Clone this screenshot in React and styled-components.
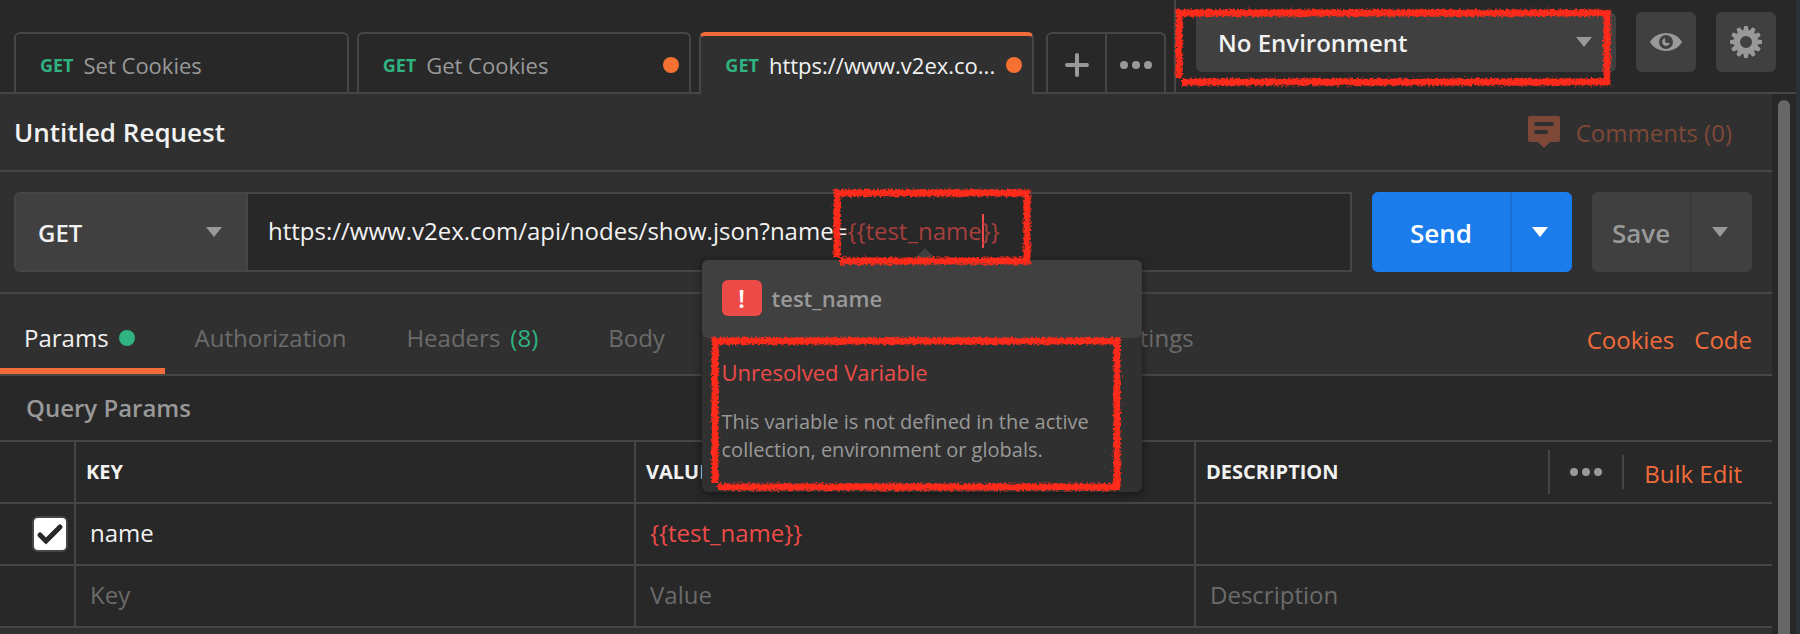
import React from 'react';
import styled, { createGlobalStyle, css } from 'styled-components';

const c = {
  page: '#282828',
  panel: '#303030',
  raised: '#404040',
  line: '#464646',
  text: '#f2f2f2',
  muted: '#999999',
  faint: '#6b6b6b',
  orange: '#f26b3a',
  green: '#2fb380',
  red: '#ed4b48',
  mark: '#ff2a1a',
};

const Global = createGlobalStyle`
  *, *::before, *::after { box-sizing: border-box; }
  html, body, #root { height: 100%; }
  body {
    margin: 0;
    background: ${c.page};
    color: ${c.text};
    font: 24px/32px "Open Sans", "Noto Sans", sans-serif;
    overflow: hidden;
  }
  button, input, select { font: inherit; color: inherit; margin: 0; }
  button { cursor: pointer; padding: 0; border: 0; background: none; }
  a { color: ${c.orange}; text-decoration: none; }
`;

const Window = styled.div`
  display: flex;
  flex-direction: column;
  height: 100%;
  background: ${c.page};
  border-right: 4px solid #2b3036;
`;

const TopBar = styled.header`
  display: flex;
  flex: none;
  height: 94px;
  border-bottom: 2px solid ${c.line};
`;

const TabStrip = styled.nav`
  flex: 1;
  min-width: 0;
  display: flex;
  align-items: flex-end;
  gap: 8px;
  padding: 32px 8px 0 14px;
`;

const RequestTab = styled.button`
  flex: 1 1 0;
  min-width: 0;
  height: 60px;
  display: flex;
  align-items: center;
  gap: 10px;
  padding: 4px 10px 0 24px;
  border: 2px solid ${c.line};
  border-bottom: 0;
  border-radius: 6px 6px 0 0;
  color: ${c.muted};
  text-align: left;
  ${(p) =>
    p.$active &&
    css`
      height: 62px;
      margin-bottom: -2px;
      padding-top: 2px;
      padding-bottom: 2px;
      border-top: 4px solid ${c.orange};
      background: ${c.panel};
      color: ${c.text};
    `}
`;

const Method = styled.span`
  font-size: 18px;
  font-weight: 700;
  color: ${c.green};
`;

const TabName = styled.span`
  flex: 1;
  min-width: 0;
  font-size: 22px;
  white-space: nowrap;
`;

const Dot = styled.span`
  flex: none;
  width: 16px;
  height: 16px;
  border-radius: 50%;
  background: ${(p) => p.$color};
`;

const TabTools = styled.div`
  flex: none;
  display: flex;
  width: 120px;
  height: 60px;
  margin-left: 4px;
  border: 2px solid ${c.line};
  border-bottom: 0;
  border-radius: 6px 6px 0 0;
`;

const TabTool = styled.button`
  flex: 1;
  display: flex;
  align-items: center;
  justify-content: center;
  padding-top: 4px;
  color: ${c.muted};
  & + & { border-left: 2px solid ${c.line}; }
`;

const EnvBar = styled.div`
  flex: none;
  display: flex;
  gap: 20px;
  padding: 12px 20px 0;
  border-left: 2px solid ${c.line};
`;

const Picker = styled.div`
  position: relative;
  display: flex;
  align-items: center;
  height: ${(p) => p.$h}px;
  width: ${(p) => p.$w}px;
  flex: none;
  border-radius: ${(p) => (p.$joined ? '6px 0 0 6px' : '6px')};
  background: ${c.raised};
  border: ${(p) => (p.$joined ? `2px solid ${c.line}` : '0')};
  color: ${c.muted};
  padding-right: 24px;
`;

const Select = styled.select`
  flex: 1;
  min-width: 0;
  height: 100%;
  appearance: none;
  border: 0;
  outline: 0;
  background: none;
  padding: 2px 20px 0 22px;
  color: ${c.text};
  font-weight: 600;
`;

const IconButton = styled.button`
  display: flex;
  align-items: center;
  justify-content: center;
  width: 60px;
  height: 60px;
  border-radius: 6px;
  background: ${c.raised};
  color: ${c.muted};
`;

const Body = styled.div`
  flex: 1;
  min-height: 0;
  display: flex;
`;

const Main = styled.main`
  flex: 1;
  min-width: 0;
  background: ${c.panel};
`;

const Scroll = styled.div`
  flex: none;
  width: 24px;
  padding: 6px 6px 0;
  background: ${c.page};
`;

const Thumb = styled.div`
  height: 100%;
  border-radius: 6px 6px 0 0;
  background: #666;
`;

const TitleRow = styled.div`
  display: flex;
  align-items: center;
  justify-content: space-between;
  height: 78px;
  padding: 0 40px 0 14px;
  border-bottom: 2px solid ${c.line};
`;

const Title = styled.h1`
  margin: 0;
  font-size: 26px;
  font-weight: 600;
`;

const Comments = styled.button`
  display: flex;
  align-items: center;
  gap: 16px;
  color: #7d4837;
  span { padding-top: 2px; }
`;

const RequestRow = styled.form`
  display: flex;
  align-items: center;
  gap: 20px;
  padding: 20px;
  padding-left: 14px;
  border-bottom: 2px solid ${c.line};
`;

const UrlGroup = styled.div`
  flex: 1;
  min-width: 0;
  display: flex;
  height: 80px;
`;

const UrlField = styled.div`
  flex: 1;
  min-width: 0;
  display: flex;
  align-items: center;
  padding: 0 20px 2px;
  border: 2px solid ${c.line};
  border-left: 0;
  background: ${c.page};
  white-space: pre;
`;

const Variable = styled.span`
  position: relative;
  display: flex;
  align-items: center;
  color: #a63f3e;
`;

const Caret = styled.span`
  width: 2px;
  height: 34px;
  margin-right: -2px;
  background: ${c.red};
`;

const Split = styled.div`
  display: flex;
  height: 80px;
  border-radius: 6px;
  overflow: hidden;
  background: ${(p) => (p.$primary ? '#1b7dec' : c.raised)};
  color: ${(p) => (p.$primary ? '#fff' : c.muted)};
`;

const SplitMain = styled.button`
  width: ${(p) => p.$w}px;
  padding-top: 2px;
  font-size: 26px;
  font-weight: 600;
`;

const SplitMore = styled.button`
  display: flex;
  align-items: center;
  justify-content: center;
  width: 62px;
  padding-right: 4px;
  border-left: 2px solid rgba(0, 0, 0, 0.1);
`;

const Sections = styled.nav`
  display: flex;
  height: 82px;
  padding-right: 20px;
  border-bottom: 2px solid ${c.line};
`;

const Section = styled.button`
  display: flex;
  align-items: center;
  gap: 10px;
  padding: 14px 30px 0;
  border-bottom: 6px solid ${(p) => (p.$active ? c.orange : 'transparent')};
  color: ${(p) => (p.$active ? c.text : c.faint)};
  white-space: nowrap;
  &:first-child { padding-left: 24px; }
`;

const Count = styled.span`
  margin-right: 10px;
  color: ${c.green};
`;

const Links = styled.div`
  margin-left: auto;
  display: flex;
  align-items: center;
  gap: 20px;
  padding-top: 12px;
`;

const Caption = styled.h2`
  margin: 0;
  padding: 16px 26px;
  background: ${c.page};
  color: ${c.muted};
  font-size: 24px;
  font-weight: 600;
`;

const Table = styled.table`
  width: 100%;
  table-layout: fixed;
  border-collapse: separate;
  border-spacing: 0;
  background: ${c.page};
  border-top: 2px solid ${c.line};
  th, td {
    height: 62px;
    padding: 0 14px;
    border-bottom: 2px solid ${c.line};
    text-align: left;
  }
  th { padding: 0 10px; font-size: 20px; font-weight: 700; }
  th + th, td + td { border-left: 2px solid ${c.line}; }
`;

const Col = styled.col`
  width: ${(p) => p.$w};
`;

const HeadCell = styled.div`
  display: flex;
  align-items: center;
  justify-content: space-between;
`;

const HeadTools = styled.div`
  display: flex;
  align-items: center;
  padding-right: 20px;
  font-size: 24px;
  font-weight: 400;
`;

const Rule = styled.span`
  width: 2px;
  height: ${(p) => p.$h}px;
  background: ${c.line};
`;

const MoreButton = styled.button`
  display: flex;
  padding: 0 20px;
  color: ${c.muted};
`;

const BulkLink = styled.a`
  padding: 4px 0 0 20px;
`;

const Check = styled.label`
  position: relative;
  display: flex;
  width: 36px;
  height: 36px;
  margin-left: 18px;
  input {
    appearance: none;
    width: 36px;
    height: 36px;
    border: 2px solid ${c.line};
    border-radius: 6px;
    background: #fff;
  }
  svg { position: absolute; inset: 2px; }
`;

const Cell = styled.input`
  display: block;
  width: 100%;
  padding: 0 0 2px;
  border: 0;
  outline: 0;
  background: none;
  color: ${(p) => (p.$red ? c.red : c.text)};
  &::placeholder { color: ${c.faint}; opacity: 1; }
`;

const Popover = styled.aside`
  position: absolute;
  z-index: 2;
  top: 46px;
  left: 50%;
  width: 440px;
  margin-left: -222px;
  border-radius: 6px;
  background: ${c.panel};
  box-shadow: 0 2px 10px rgba(0, 0, 0, 0.5);
  white-space: normal;
  color: ${c.muted};
  &::before {
    content: '';
    position: absolute;
    top: -12px;
    left: 211px;
    border: 12px solid transparent;
    border-top: 0;
    border-bottom-color: ${c.raised};
  }
`;

const PopHead = styled.div`
  display: flex;
  align-items: center;
  gap: 10px;
  height: 78px;
  padding: 0 20px 2px;
  border-radius: 6px;
  background: ${c.raised};
  font-size: 22px;
  font-weight: 600;
`;

const Alert = styled.span`
  width: 40px;
  height: 36px;
  border-radius: 6px;
  background: ${c.red};
  color: #fff;
  font-size: 26px;
  line-height: 36px;
  text-align: center;
`;

const PopBody = styled.div`
  padding: 18px 20px 28px;
`;

const PopTitle = styled.h3`
  margin: 0 0 20px;
  color: ${c.red};
  font-size: 22px;
  font-weight: 400;
  line-height: 32px;
`;

const PopText = styled.p`
  margin: 0;
  font-size: 20px;
  line-height: 28px;
`;

const MarkSvg = styled.svg`
  position: absolute;
  z-index: 3;
  top: ${(p) => p.$top}px;
  left: ${(p) => p.$left}px;
  overflow: visible;
  pointer-events: none;
`;

/* Crayon-like frame drawn over the parts that the reader should look at. */
function Mark({ id, w, h, top, left }) {
  return (
    <MarkSvg $top={top} $left={left} width={w} height={h} aria-hidden="true">
      <filter id={id} x="-5%" y="-10%" width="110%" height="120%" colorInterpolationFilters="sRGB">
        <feTurbulence type="fractalNoise" baseFrequency="0.45" numOctaves="2" seed="4" />
        <feDisplacementMap in="SourceGraphic" scale="6" xChannelSelector="R" yChannelSelector="G" />
      </filter>
      <path
        d={`M4 ${h - 8}V4H${w - 4}V${h - 4}H7`}
        fill="none"
        stroke={c.mark}
        strokeWidth="7"
        filter={`url(#${id})`}
      />
    </MarkSvg>
  );
}

const Triangle = () => (
  <svg width="16" height="10" viewBox="0 0 16 10" fill="currentColor" aria-hidden="true">
    <path d="M0 0h16L8 10z" />
  </svg>
);

const Dots = () => (
  <svg width="32" height="8" viewBox="0 0 32 8" fill="currentColor" aria-hidden="true">
    <circle cx="4" cy="4" r="4" />
    <circle cx="16" cy="4" r="4" />
    <circle cx="28" cy="4" r="4" />
  </svg>
);

const Plus = () => (
  <svg width="24" height="24" viewBox="0 0 24 24" aria-hidden="true">
    <path d="M12 2v20M2 12h20" stroke="currentColor" strokeWidth="4" strokeLinecap="round" />
  </svg>
);

const Eye = () => (
  <svg width="32" height="18" viewBox="0 0 32 18" fill="currentColor" aria-hidden="true">
    <path
      fillRule="evenodd"
      d="M16 0C9 0 3 3.500 0 9c3 5.500 9 9 16 9s13-3.500 16-9C29 3.500 23 0 16 0zm0 16a7 7 0 1 1 0-14 7 7 0 0 1 0 14z"
    />
    <path d="M15 5a4 4 0 1 0 5 5h-3a2 2 0 0 1-2-2z" />
  </svg>
);

const gearTeeth = Array.from({ length: 12 }, (_, i) => i * 30);
const Gear = () => (
  <svg width="32" height="32" viewBox="-16 -16 32 32" fill="currentColor" aria-hidden="true">
    {gearTeeth.map((a) => (
      <path key={a} d="M-2.800 -11L-1.800 -16H1.800L2.800 -11z" transform={`rotate(${a})`} />
    ))}
    <circle r="9" fill="none" stroke="currentColor" strokeWidth="6" />
  </svg>
);

const CommentIcon = () => (
  <svg width="32" height="32" viewBox="0 0 32 32" fill="currentColor" aria-hidden="true">
    <path
      fillRule="evenodd"
      d="M2 0h28a2 2 0 0 1 2 2v22a2 2 0 0 1-2 2h-8l-6 6-6-6H2a2 2 0 0 1-2-2V2a2 2 0 0 1 2-2zm6 6a2 2 0 0 0 0 4h16a2 2 0 0 0 0-4zm0 8a2 2 0 0 0 0 4h10a2 2 0 0 0 0-4z"
    />
  </svg>
);

export default function App() {
  return (
    <Window>
      <Global />
      <TopBar>
        <TabStrip aria-label="Open requests">
          <RequestTab>
            <Method>GET</Method>
            <TabName>Set Cookies</TabName>
          </RequestTab>
          <RequestTab>
            <Method>GET</Method>
            <TabName>Get Cookies</TabName>
            <Dot $color="#f47132" />
          </RequestTab>
          <RequestTab $active>
            <Method>GET</Method>
            <TabName>https://www.v2ex.co...</TabName>
            <Dot $color="#f47132" />
          </RequestTab>
          <TabTools>
            <TabTool aria-label="New tab"><Plus /></TabTool>
            <TabTool aria-label="Tab options"><Dots /></TabTool>
          </TabTools>
        </TabStrip>
        <EnvBar>
          <Picker $w={420} $h={60}>
            <Select aria-label="Environment">
              <option>No Environment</option>
            </Select>
            <Triangle />
            <Mark id="mark-env" w={436} h={77} top={-3} left={-21} />
          </Picker>
          <IconButton aria-label="Environment quick look"><Eye /></IconButton>
          <IconButton aria-label="Settings"><Gear /></IconButton>
        </EnvBar>
      </TopBar>
      <Body>
        <Main>
          <TitleRow>
            <Title>Untitled Request</Title>
            <Comments><CommentIcon /><span>Comments (0)</span></Comments>
          </TitleRow>
          <RequestRow>
            <UrlGroup>
              <Picker $w={234} $h={80} $joined>
                <Select aria-label="Method">
                  <option>GET</option>
                </Select>
                <Triangle />
              </Picker>
              <UrlField role="textbox" aria-label="Request URL" tabIndex={0}>
                <span>https://www.v2ex.com/api/nodes/show.json?name=</span>
                <Variable>
                  <span>{'{{test_name'}</span>
                  <Caret />
                  <span>{'}}'}</span>
                  <Popover>
                    <PopHead><Alert>!</Alert>test_name</PopHead>
                    <PopBody>
                      <PopTitle>Unresolved Variable</PopTitle>
                      <PopText>
                        This variable is not defined in the active collection, environment or globals.
                      </PopText>
                    </PopBody>
                    <Mark id="mark-popover" w={410} h={154} top={77} left={9} />
                  </Popover>
                  <Mark id="mark-variable" w={198} h={76} top={-25} left={-14} />
                </Variable>
              </UrlField>
            </UrlGroup>
            <Split $primary>
              <SplitMain type="button" $w={138}>Send</SplitMain>
              <SplitMore type="button" aria-label="Send options"><Triangle /></SplitMore>
            </Split>
            <Split>
              <SplitMain type="button" $w={98}>Save</SplitMain>
              <SplitMore type="button" aria-label="Save options"><Triangle /></SplitMore>
            </Split>
          </RequestRow>
          <Sections aria-label="Request sections">
            <Section $active>Params<Dot $color={c.green} /></Section>
            <Section>Authorization</Section>
            <Section>Headers<Count>(8)</Count></Section>
            <Section>Body</Section>
            <Section>Pre-request Script</Section>
            <Section>Tests</Section>
            <Section>Settings</Section>
            <Links>
              <a href="#cookies">Cookies</a>
              <a href="#code">Code</a>
            </Links>
          </Sections>
          <Caption>Query Params</Caption>
          <Table>
            <colgroup>
              <Col $w="74px" />
              <Col $w="calc(560 / 1772 * 100%)" />
              <Col $w="calc(560 / 1772 * 100%)" />
              <Col />
            </colgroup>
            <thead>
              <tr>
                <th aria-label="Enabled" />
                <th>KEY</th>
                <th>VALUE</th>
                <th>
                  <HeadCell>
                    DESCRIPTION
                    <HeadTools>
                      <Rule $h={44} />
                      <MoreButton aria-label="Column options"><Dots /></MoreButton>
                      <Rule $h={34} />
                      <BulkLink href="#bulk-edit">Bulk Edit</BulkLink>
                    </HeadTools>
                  </HeadCell>
                </th>
              </tr>
            </thead>
            <tbody>
              <tr>
                <td>
                  <Check>
                    <input type="checkbox" defaultChecked aria-label="Use this parameter" />
                    <svg width="32" height="32" viewBox="0 0 32 32" aria-hidden="true">
                      <path d="M6 17l6 6L26 9" fill="none" stroke="#282828" strokeWidth="5" strokeLinecap="round" />
                    </svg>
                  </Check>
                </td>
                <td><Cell aria-label="Key" defaultValue="name" /></td>
                <td><Cell aria-label="Value" $red defaultValue="{{test_name}}" /></td>
                <td><Cell aria-label="Description" /></td>
              </tr>
              <tr>
                <td />
                <td><Cell aria-label="New key" placeholder="Key" /></td>
                <td><Cell aria-label="New value" placeholder="Value" /></td>
                <td><Cell aria-label="New description" placeholder="Description" /></td>
              </tr>
            </tbody>
          </Table>
        </Main>
        <Scroll><Thumb /></Scroll>
      </Body>
    </Window>
  );
}
